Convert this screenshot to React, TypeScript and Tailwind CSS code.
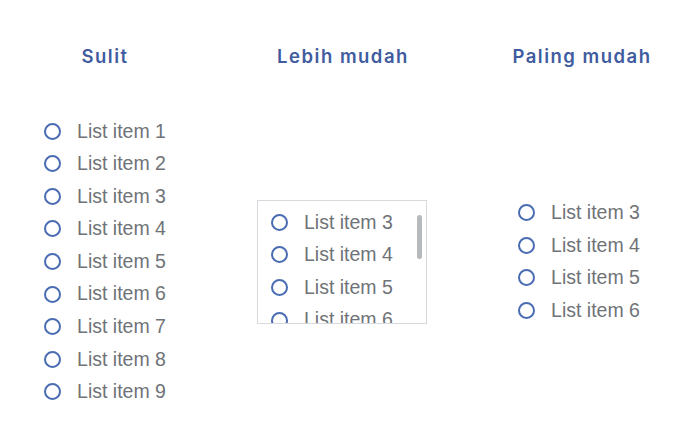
import type { FC } from 'react';

const ITEM_TEXT = "text-[19.5px] text-[#6f7377] font-['Liberation_Sans',Arial,sans-serif]";

const Radio: FC = () => (
  <span className="w-[17px] h-[17px] shrink-0 rounded-full border-2 border-[#4a6cb3]" />
);

const Item: FC<{ n: number }> = ({ n }) => (
  <li className="flex items-center h-[32.6px] gap-[16px]">
    <Radio />
    <span className={ITEM_TEXT}>List item {n}</span>
  </li>
);

const Heading: FC<{ children: string }> = ({ children }) => (
  <h2 className="text-center text-[18.5px] leading-[22px] font-semibold text-[#3f5ca0] font-['Inter',sans-serif] tracking-[1.5px]">
    {children}
  </h2>
);

export default function App() {
  return (
    <div className="w-[700px] h-[441px] bg-white flex flex-col">
      <div className="grid grid-cols-[210px_266px_212px] h-[82px] pt-[45px]">
        <Heading>Sulit</Heading>
        <Heading>Lebih mudah</Heading>
        <Heading>Paling mudah</Heading>
      </div>

      <div className="grid grid-cols-[210px_266px_206px] flex-1 items-center">
        {/* all nine items laid out flat */}
        <ul className="justify-self-center">
          {[1, 2, 3, 4, 5, 6, 7, 8, 9].map((n) => (
            <Item key={n} n={n} />
          ))}
        </ul>

        {/* short list inside a scrolling box */}
        <div className="justify-self-center relative -ml-[2px] w-[170px] h-[124px] border border-[#d6dade] overflow-hidden">
          <ul className="pt-[5.5px] pl-[13px]">
            {[3, 4, 5, 6, 7].map((n) => (
              <Item key={n} n={n} />
            ))}
          </ul>
          <div className="absolute right-[4px] top-[14px] w-[5px] h-[44px] rounded-full bg-[#b7babd]" />
        </div>

        {/* only the relevant items */}
        <ul className="justify-self-center">
          {[3, 4, 5, 6].map((n) => (
            <Item key={n} n={n} />
          ))}
        </ul>
      </div>
    </div>
  );
}
